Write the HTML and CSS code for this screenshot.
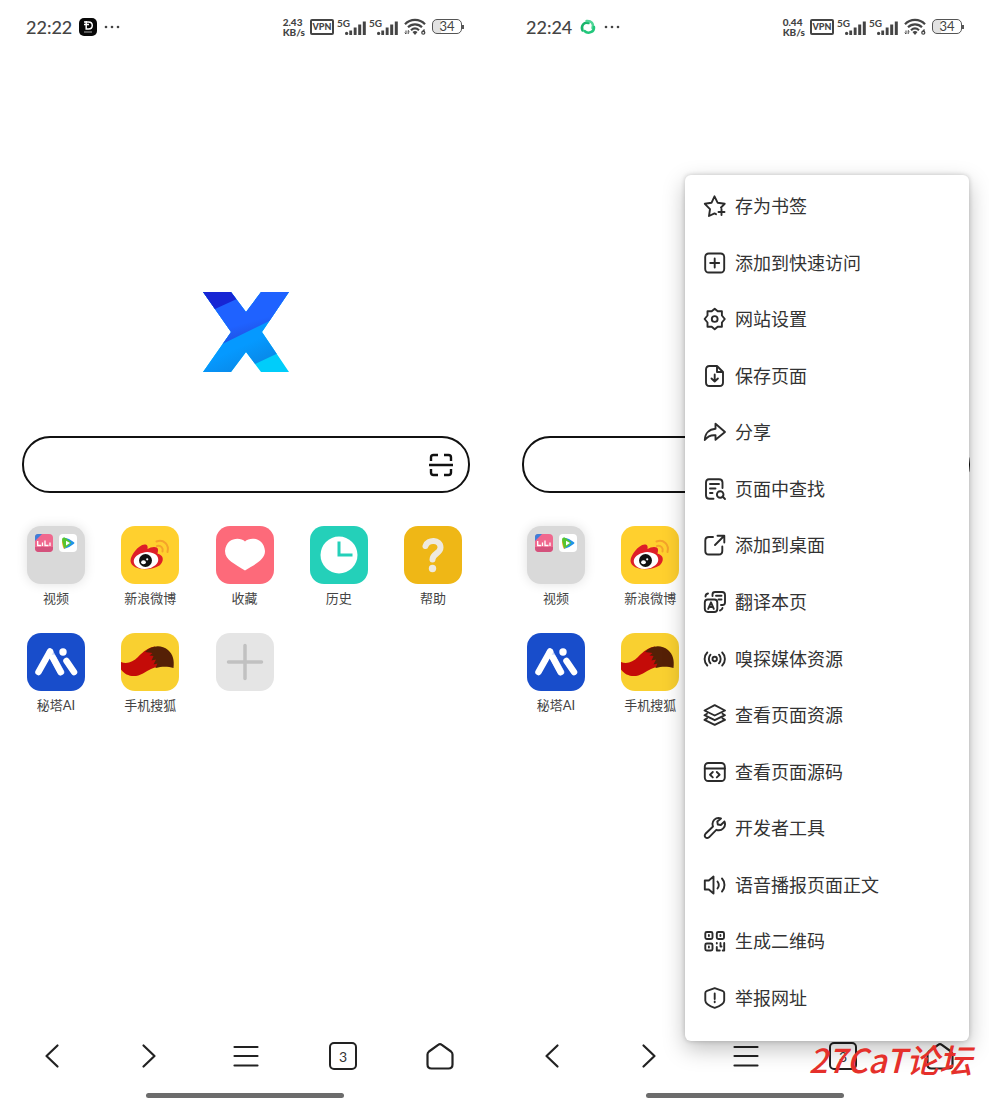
FILE: index.html
```html
<!DOCTYPE html>
<html lang="zh-CN">
<head>
    <meta charset="UTF-8">
    <meta name="viewport" content="width=device-width, initial-scale=1.0">
    <title>X 浏览器</title>
    <link rel="stylesheet" href="styles.css">
</head>
<body>
    <!-- shared icons -->
    <svg class="sprite" aria-hidden="true">
        <defs>
            <clipPath id="xClip"><path d="M1 0H29L44 20 59 0H87L60 40 87 80H59L44 60 29 80H1L29 40Z"/></clipPath>
            <clipPath id="tileClip"><rect width="58" height="58" rx="14"/></clipPath>
            <linearGradient id="xMid" x1="0" y1="0" x2="0.4" y2="1">
                <stop offset="0.6" stop-color="#1f62ff"/><stop offset="1" stop-color="#2048d0"/>
            </linearGradient>
            <linearGradient id="xLow" x1="0.3" y1="0" x2="0.8" y2="1">
                <stop offset="0.6" stop-color="#0599ff"/><stop offset="1" stop-color="#0b80dc"/>
            </linearGradient>
        </defs>
        <symbol id="x-logo" viewBox="0 0 88 80">
            <g clip-path="url(#xClip)">
                <path fill="#00cdfa" d="M0 0H88V80H0Z"/>
                <path fill="url(#xLow)" d="M0 0H88V55.500L36 80H0Z"/>
                <path fill="url(#xMid)" d="M0 0H88V19L0 62Z"/>
                <path fill="#1726d4" d="M0 0H50L0 23Z"/>
            </g>
        </symbol>
        <symbol id="signal" viewBox="0 0 21 14">
            <circle cx="1.600" cy="12.400" r="1.600"/>
            <path d="M4.300 9.500h2.800V14H4.300zM8.700 6.500h2.900V14H8.700zM13.200 3.500h3V14h-3zM17.800 0.500h3V14h-3z"/>
        </symbol>
        <symbol id="wifi" viewBox="0 0 22 17">
            <path fill="none" stroke="#444" stroke-width="2.200" d="M1 6.200C6.500 0.500 15.500 0.500 21 6.200M4 9.300c4-4 10-4 14 0M7 12.200c2.500-2.300 5.500-2.300 8 0"/>
            <path d="M8.500 14q2.500-2 5 0L11 17z"/>
            <path fill="none" stroke="#444" d="M2 12.500v3.500M0.700 14.700L2 16M4.200 16v-3.500M4.200 12.500l1.300 1.300"/>
            <path fill="none" stroke="#444" stroke-width="1.300" d="M20.500 11.500l-2 2.500"/><circle cx="19.300" cy="14.700" r="1.500" fill="none" stroke="#444" stroke-width="1.300"/>
        </symbol>
        <symbol id="scan" viewBox="0 0 24 24">
            <path d="M2 8V4.500Q2 2 4.500 2H9M15 2h4.500Q22 2 22 4.500V8M2 16v3.500Q2 22 4.500 22H9M15 22h4.500q2.500 0 2.500-2.500V16M0 12h24"/>
        </symbol>
        <symbol id="bili" viewBox="0 0 18 18">
            <rect width="18" height="18" rx="4" fill="#f0688e"/>
            <path fill="#d4527c" d="M0 13h18v1a4 4 0 0 1-4 4H4a4 4 0 0 1-4-4z"/>
            <path fill="#3f7fd8" d="M0 7V3q0-3 3-3h4z"/>
            <path fill="none" stroke="#fff" stroke-width="1.300" d="M2.700 7v4.500h3.500M7.500 8.500v3.500M10 6.500v5h3.500M15 8.500v3.500"/>
        </symbol>
        <symbol id="tencent" viewBox="0 0 18 18">
            <rect width="18" height="18" rx="4" fill="#fff"/>
            <path fill="#2094e8" d="M5 3.500Q10 4 15 8.200q1 .8 0 1.600Q10 14 5 15z"/>
            <path fill="#f6a61c" d="M5 15Q3 12 3 6l6 5z"/>
            <path fill="#56c52f" d="M3 6q0-3 2-2.500 5 2 7 5.500-2 3-7 5z"/>
            <path fill="#fff" d="M7 6.700l4 2.300-4 2.500z"/>
        </symbol>
        <symbol id="weibo" viewBox="0 0 58 58">
            <path fill="#ffd02e" d="M0 0h58v58H0z" clip-path="url(#tileClip)"/>
            <path fill="none" stroke="#f5a32b" stroke-width="2" stroke-linecap="round" d="M35.500 15.500c7-2.500 13 3 11 10.500M36 20c4-1 6.500 2 5.500 5.500"/>
            <path fill="#de1f28" d="M9.500 35c0-6 8-16 14-16.500 3 0 3.500 2 3 4.500 4-2.500 10-3 10.500.5.300 1.500-.5 3-.5 4 7 2 6.500 8 2 12-9 6-28 5-29-4.500z"/>
            <ellipse cx="25" cy="34.500" rx="12.300" ry="8.300" fill="#fff" transform="rotate(-7 25 34.500)"/>
            <circle cx="24.500" cy="34.500" r="6.500" fill="#111"/>
            <ellipse cx="22.500" cy="36.300" rx="2.400" ry="2" fill="#fff"/><circle cx="26.200" cy="33.300" r="1.100" fill="#fff"/>
        </symbol>
        <symbol id="heart" viewBox="0 0 58 58">
            <rect width="58" height="58" rx="14" fill="#fd6a7a"/>
            <path fill="#fff" d="M29 15.500c5-5 19-4 20 9.500 0 9-10 13-20 19.500C19 38 9 34 9 25c1-13.500 15-14.500 20-9.500z"/>
        </symbol>
        <symbol id="clock" viewBox="0 0 58 58">
            <rect width="58" height="58" rx="14" fill="#24d0b9"/>
            <circle cx="29" cy="29" r="18.500" fill="#fff"/>
            <path fill="none" stroke="#24d0b9" stroke-width="3" d="M29 15.500V29h13.500"/>
        </symbol>
        <symbol id="help" viewBox="0 0 58 58">
            <rect width="58" height="58" rx="14" fill="#efb716"/>
            <path fill="none" stroke="#eee9de" stroke-width="6" stroke-linecap="round" d="M21.500 20c2-7 15-7 15 1.500 0 6-8 6-8 12"/>
            <circle cx="28.500" cy="42.500" r="3.700" fill="#eee9de"/>
        </symbol>
        <symbol id="metaso" viewBox="0 0 58 58">
            <rect width="58" height="58" rx="14" fill="#184dcb"/>
            <path fill="none" stroke="#c8d7fa" stroke-width="6.500" stroke-linecap="round" d="M23 19l11 20"/>
            <path fill="none" stroke="#fff" stroke-width="6.500" stroke-linecap="round" stroke-linejoin="round" d="M11.500 39L23 18.500M26 25l7.500 14M39.500 28L47 39"/>
            <circle cx="36" cy="19" r="3.700" fill="#fff"/>
        </symbol>
        <symbol id="sohu" viewBox="0 0 58 58">
            <rect width="58" height="58" rx="14" fill="#f9d030"/>
            <path fill="#c40b08" d="M0 29c6 2.500 12 0 17-5 6-6 10-9.500 17-10.500l4 20.500c-6 0-10 3-16 6.500-8 4.500-17 3-22-4z"/>
            <path fill="#552006" d="M24 19c6-6.500 16-8 23-2 5 4.500 6.500 10 5.500 18-5-1.500-11-2-18 0l2-4.500-4 1 2.500-5-4.500 1 2-4.500-4-.5 3-2.500z"/>
        </symbol>
        <symbol id="plus" viewBox="0 0 58 58">
            <rect width="58" height="58" rx="14" fill="#e5e5e5"/>
            <path fill="none" stroke="#c1c1c1" stroke-width="3.500" stroke-linecap="round" d="M29 12.500v33M12.500 29h33"/>
        </symbol>
        <symbol id="back" viewBox="0 0 28 28"><path d="M19.500 3.500L8.500 14l11 10.500"/></symbol>
        <symbol id="forward" viewBox="0 0 28 28"><path d="M8.500 3.500L19.500 14l-11 10.500"/></symbol>
        <symbol id="lines" viewBox="0 0 28 28"><path d="M2.500 5h23M2.500 14h23M2.500 23.500h23"/></symbol>
        <symbol id="home" viewBox="0 0 28 28"><path d="M12.500 2.700q1.500-1.200 3 0L25 9.500q1.500 1.200 1.500 3v10q0 4-4 4h-17q-4 0-4-4v-10q0-1.800 1.500-3z"/></symbol>
    </svg>

    <main class="screens">
        <section class="phone">
            <header class="status">
                <time class="time">22:22</time>
                <svg class="app" viewBox="0 0 18 18">
                    <rect width="18" height="18" rx="5" fill="#080808"/>
                    <path fill="none" stroke="#fff" stroke-width="1.500" d="M5 4h4.500c5 0 5 7 0 7H7.200V3M5 6.500h5"/>
                    <path stroke="#aaa" d="M5 14h8"/>
                </svg>
                <svg class="more" viewBox="0 0 16 4"><circle cx="2" cy="2" r="1.300"/><circle cx="8" cy="2" r="1.300"/><circle cx="14" cy="2" r="1.300"/></svg>
                <span class="speed"><span>2.43</span><span>KB/s</span></span>
                <span class="vpn">VPN</span>
                <span class="cell"><small>5G</small><svg><use href="#signal"/></svg></span>
                <span class="cell"><small>5G</small><svg><use href="#signal"/></svg></span>
                <svg class="wifi"><use href="#wifi"/></svg>
                <span class="battery">34</span>
            </header>

            <svg class="logo"><use href="#x-logo"/></svg>

            <form class="search">
                <input type="text" aria-label="搜索">
                <button type="button" aria-label="扫一扫"><svg><use href="#scan"/></svg></button>
            </form>

            <nav class="shortcuts">
                <a href="#"><span class="folder"><svg><use href="#bili"/></svg><svg><use href="#tencent"/></svg></span>视频</a>
                <a href="#"><svg class="tile"><use href="#weibo"/></svg>新浪微博</a>
                <a href="#"><svg class="tile"><use href="#heart"/></svg>收藏</a>
                <a href="#"><svg class="tile"><use href="#clock"/></svg>历史</a>
                <a href="#"><svg class="tile"><use href="#help"/></svg>帮助</a>
                <a href="#"><svg class="tile"><use href="#metaso"/></svg>秘塔AI</a>
                <a href="#"><svg class="tile"><use href="#sohu"/></svg>手机搜狐</a>
                <a href="#" aria-label="添加"><svg class="tile"><use href="#plus"/></svg></a>
            </nav>

            <footer class="toolbar">
                <button type="button" aria-label="后退"><svg><use href="#back"/></svg></button>
                <button type="button" aria-label="前进"><svg><use href="#forward"/></svg></button>
                <button type="button" aria-label="菜单"><svg><use href="#lines"/></svg></button>
                <button type="button" class="tabs">3</button>
                <button type="button" aria-label="主页"><svg><use href="#home"/></svg></button>
            </footer>
            <div class="handle"></div>
        </section>

        <section class="phone">
            <header class="status">
                <time class="time">22:24</time>
                <svg class="app" viewBox="0 0 18 18">
                    <g fill="none" stroke-width="2.500" stroke-linecap="round">
                        <path stroke="#19b56b" d="M3.500 12.500C1.500 8 5 3.500 9.500 5"/>
                        <path stroke="#4fd596" d="M7.500 3c5-.5 7.500 3 6 7"/>
                        <path stroke="#22c77b" d="M15 9c.5 5-6 7.500-9.500 4"/>
                    </g>
                </svg>
                <svg class="more" viewBox="0 0 16 4"><circle cx="2" cy="2" r="1.300"/><circle cx="8" cy="2" r="1.300"/><circle cx="14" cy="2" r="1.300"/></svg>
                <span class="speed"><span>0.44</span><span>KB/s</span></span>
                <span class="vpn">VPN</span>
                <span class="cell"><small>5G</small><svg><use href="#signal"/></svg></span>
                <span class="cell"><small>5G</small><svg><use href="#signal"/></svg></span>
                <svg class="wifi"><use href="#wifi"/></svg>
                <span class="battery">34</span>
            </header>

            <div class="logo"></div>

            <form class="search">
                <input type="text" aria-label="搜索">
            </form>

            <nav class="shortcuts">
                <a href="#"><span class="folder"><svg><use href="#bili"/></svg><svg><use href="#tencent"/></svg></span>视频</a>
                <a href="#"><svg class="tile"><use href="#weibo"/></svg>新浪微博</a>
                <i></i><i></i><i></i>
                <a href="#"><svg class="tile"><use href="#metaso"/></svg>秘塔AI</a>
                <a href="#"><svg class="tile"><use href="#sohu"/></svg>手机搜狐</a>
            </nav>

            <footer class="toolbar">
                <button type="button" aria-label="后退"><svg><use href="#back"/></svg></button>
                <button type="button" aria-label="前进"><svg><use href="#forward"/></svg></button>
                <button type="button" aria-label="菜单"><svg><use href="#lines"/></svg></button>
                <button type="button" class="tabs">3</button>
                <button type="button" aria-label="主页"><svg><use href="#home"/></svg></button>
            </footer>
            <div class="handle"></div>

            <div class="menu">
                <button type="button"><svg viewBox="0 0 24 24"><path d="M13 20.200l-1.500-.8L6 22l1-6.900L1.800 9.800l6.700-1L11.500 2.300l3.200 6.500 7 1-3.700 3.700M18.500 15v6M15.500 18h6"/></svg>存为书签</button>
                <button type="button"><svg viewBox="0 0 24 24"><rect x="2.200" y="2.500" width="19" height="19" rx="3.500"/><path d="M11.700 7.500v9M7.200 12h9"/></svg>添加到快速访问</button>
                <button type="button"><svg viewBox="0 0 24 24"><path d="M11.700 1.800l3 2.500h4.200v4.200l2.900 3.500-2.900 3.500v4.200h-4.200l-3 2.500-3-2.500H4.500v-4.200L1.600 12l2.900-3.500V4.300h4.200z"/><circle cx="11.700" cy="12" r="2.900"/></svg>网站设置</button>
                <button type="button"><svg viewBox="0 0 24 24"><path d="M14 2H6.500Q3 2 3 5.500v13Q3 22 6.500 22h10q3.500 0 3.500-3.500V8zM14 2v6h6M11.700 10.500v7M8.500 14.500l3.200 3 3.200-3"/></svg>保存页面</button>
                <button type="button"><svg viewBox="0 0 24 24"><path d="M12.500 3.800L22 12l-9.500 7.800v-4.500C8 14.800 4.500 16.500 1.800 20 2 13.500 6 9.300 12.500 8.800z"/></svg>分享</button>
                <button type="button"><svg viewBox="0 0 24 24"><path d="M19.500 11V5.500Q19.500 2.200 16 2.200H6Q3 2.200 3 5.500v13q0 3.300 3.500 3.300h4M7 7h9M7 11.500h5.500M7 16h2.500M19.500 19.500l2.500 2.500"/><circle cx="17.200" cy="17.500" r="3.300"/></svg>页面中查找</button>
                <button type="button"><svg viewBox="0 0 24 24"><path d="M10 4H6Q2.300 4 2.300 7.500V18q0 3.500 3.500 3.500h10q3.500 0 3.500-3.500v-4.500M12 12L21 3M14.500 2.700H21.300V9.500"/></svg>添加到桌面</button>
                <button type="button"><svg viewBox="0 0 24 24"><rect x="1.800" y="9.500" width="12.500" height="12.500" rx="3"/><path d="M5.200 18.800l2.800-6.500 2.800 6.500M6.200 17h3.700M9.500 6V4.500Q9.500 2 12 2h7q3 0 3 3v7.500q0 2.500-2.500 2.500H18M13 5.800h5.500M15.500 9.500h3M2.500 6.500Q2.500 4 5 3.500M17 20.500q2-.5 2.500-2.500"/></svg>翻译本页</button>
                <button type="button"><svg viewBox="0 0 24 24"><circle cx="11.700" cy="12" r="2.200"/><path d="M4.300 5.500c-3.600 3.500-3.600 9.500 0 13M19.200 5.500c3.600 3.500 3.600 9.500 0 13M7.500 7.700c-2.200 2.300-2.200 6.300 0 8.600M16 7.700c2.200 2.300 2.200 6.300 0 8.600"/></svg>嗅探媒体资源</button>
                <button type="button"><svg viewBox="0 0 24 24"><path d="M11.700 2.200L22 7.500l-10.300 5L1.500 7.500zM4 10.700l-2.500 1.500 10.200 5 10.300-5-2.500-1.500M4 15.400l-2.500 1.500 10.200 5 10.300-5-2.500-1.500"/></svg>查看页面资源</button>
                <button type="button"><svg viewBox="0 0 24 24"><rect x="1.800" y="3" width="20" height="18" rx="3.500"/><path d="M1.800 8.500h20M9.800 12l-2.800 2.700 2.800 2.700M13.800 12l2.800 2.700-2.800 2.700"/></svg>查看页面源码</button>
                <button type="button"><svg viewBox="0 0 24 24"><path d="M18 2.500c-5-2-10 2.500-8 8l-7.500 7.300q-1.500 2 0 3.500t3.500 0l7.300-7.500c5.500 2 10.300-3 8.200-8.300L17.800 9l-3-.5-.5-3z"/></svg>开发者工具</button>
                <button type="button"><svg viewBox="0 0 24 24"><path d="M1.800 7.500h4L10.500 3.500v17l-4.700-4h-4zM14.500 8.500c1.500 2 1.500 5 0 7M19 5.500c3.300 3.500 3.300 9.500 0 13"/></svg>语音播报页面正文</button>
                <button type="button"><svg viewBox="0 0 24 24"><rect x="2.300" y="3" width="7.200" height="7" rx="1.500"/><rect x="13.800" y="3" width="7.200" height="7" rx="1.500"/><rect x="2.300" y="14.500" width="7.200" height="7" rx="1.500"/><path d="M5.900 6v1M17.400 6v1M5.900 17.500v1M13.800 14v.5M13.800 18v3.500h3M17.500 14v3.500h1M21.200 14v7.500h-1.500"/></svg>生成二维码</button>
                <button type="button"><svg viewBox="0 0 24 24"><path d="M11.700 2.200l7.800 2.600q1.700.6 1.700 2.200v7.500c0 3-5 5.800-9.500 7.300-4.500-1.500-9.400-4.300-9.400-7.300V7q0-1.600 1.700-2.200zM11.700 7.500v5.500M11.700 15.500v.8"/></svg>举报网址</button>
            </div>

            <div class="watermark">27CaT论坛</div>
        </section>
    </main>
</body>
</html>
```
FILE: styles.css
```css
* {
    box-sizing: border-box;
}

body {
    margin: 0;
    background-color: #fff;
    color: #333;
    font-family: Lato, "Noto Sans CJK SC", sans-serif;
}

button {
    padding: 0;
    border: none;
    background: none;
    color: inherit;
    font-family: inherit;
    cursor: pointer;
}

svg {
    display: block;
    flex: none;
}

.sprite {
    position: absolute;
    width: 0;
    height: 0;
}

.screens {
    display: grid;
    grid-template-columns: 1fr 1fr;
    column-gap: 11px;
    min-height: 100vh;
}

.phone {
    position: relative;
    display: flex;
    flex-direction: column;
}

/* status bar */
.status {
    display: flex;
    align-items: center;
    height: 53px;
    padding: 0 24px 0 26px;
    color: #444;
    fill: #444;
}

.time {
    font-size: 18px;
    font-weight: 500;
}

.app {
    width: 18px;
    height: 18px;
    margin-left: 7px;
}

.more {
    width: 16px;
    height: 4px;
    margin-left: 7px;
}

.speed {
    display: flex;
    flex-direction: column;
    margin-left: auto;
    font-size: 10px;
    line-height: 10px;
    font-weight: 900;
}

.vpn {
    width: 24px;
    margin-left: 5px;
    border: 2px solid #444;
    border-radius: 2px;
    font-size: 9px;
    line-height: 12px;
    font-weight: 900;
    text-align: center;
}

.cell {
    display: flex;
    align-items: flex-end;
    width: 29px;
    height: 16px;
    margin-left: 3px;
}

.cell small {
    align-self: flex-start;
    width: 8px;
    font-size: 10px;
    line-height: 8px;
    font-weight: 700;
}

.cell svg {
    width: 21px;
    height: 14px;
}

.wifi {
    width: 22px;
    height: 17px;
    margin-left: 6px;
}

.battery {
    position: relative;
    width: 30px;
    margin: 0 3px 0 6px;
    border: 1px solid #555;
    border-radius: 5px;
    background: linear-gradient(90deg, #e2e2e2 30%, #fff 30%);
    font-size: 13px;
    line-height: 13px;
    text-align: center;
}

.battery::after {
    content: "";
    position: absolute;
    top: 5px;
    right: -3px;
    width: 2px;
    height: 4px;
    background-color: #555;
}

/* home page */
.logo {
    align-self: center;
    width: 88px;
    height: 80px;
    margin: 239px 0 0 2px;
}

.search {
    display: flex;
    align-items: center;
    height: 57px;
    margin: 64px 19px 0 22px;
    padding: 0 15px 0 24px;
    border: 2px solid #111;
    border-radius: 28px;
}

.search input {
    flex: 1;
    min-width: 0;
    border: none;
    outline: none;
    background: none;
    font-size: 18px;
}

.search svg {
    width: 24px;
    height: 24px;
    fill: none;
    stroke: #111;
    stroke-width: 2.4;
}

.shortcuts {
    display: grid;
    grid-template-columns: repeat(5, 58px);
    justify-content: space-between;
    row-gap: 25px;
    margin-top: 33px;
    padding: 0 27px;
}

.shortcuts a {
    display: flex;
    flex-direction: column;
    align-items: center;
    gap: 4px;
    height: 82px;
    color: #444;
    font-size: 13px;
    line-height: 20px;
    text-decoration: none;
    white-space: nowrap;
}

.tile,
.folder {
    width: 58px;
    height: 58px;
}

.folder {
    display: flex;
    gap: 6px;
    padding: 8px;
    border-radius: 14px;
    background-color: #d9d9d9;
    box-shadow: 0 0 12px rgba(0, 0, 0, 0.12);
}

.folder svg {
    width: 18px;
    height: 18px;
}

/* bottom toolbar */
.toolbar {
    display: flex;
    justify-content: space-around;
    margin-top: auto;
    padding-left: 3px;
}

.toolbar svg,
.tabs {
    width: 28px;
    height: 28px;
}

.toolbar svg {
    fill: none;
    stroke: #222;
    stroke-width: 2.2;
    stroke-linecap: round;
    stroke-linejoin: round;
}

.tabs {
    border: 2px solid #222;
    border-radius: 5px;
    font-size: 14px;
}

.handle {
    align-self: center;
    width: 198px;
    height: 5px;
    margin: 23px 0 3px;
    border-radius: 3px;
    background-color: #6c6c6c;
}

/* popup menu */
.menu {
    position: absolute;
    top: 175px;
    right: 20px;
    bottom: 60px;
    display: grid;
    grid-auto-rows: 1fr;
    width: 284px;
    padding: 3px 0 15px;
    border-radius: 6px;
    background-color: #fff;
    box-shadow: 0 8px 22px rgba(0, 0, 0, 0.25), 0 0 5px rgba(0, 0, 0, 0.2);
}

.menu button {
    display: flex;
    align-items: center;
    gap: 8px;
    padding: 0 18px;
    font-size: 18px;
    line-height: 26px;
}

.menu svg {
    width: 24px;
    height: 24px;
    fill: none;
    stroke: #2b2b2b;
    stroke-width: 1.9;
    stroke-linecap: round;
    stroke-linejoin: round;
}

.watermark {
    position: absolute;
    right: 17px;
    bottom: 20px;
    color: #e5302b;
    font-family: "Noto Sans CJK SC", sans-serif;
    font-size: 33px;
    line-height: 44px;
    font-style: italic;
    font-weight: 500;
    white-space: nowrap;
}
```
